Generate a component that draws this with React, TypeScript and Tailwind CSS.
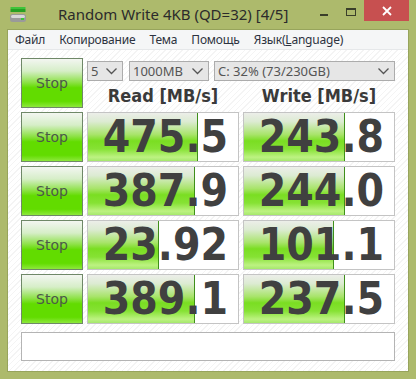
import React from "react";

const rows = [
  { r: "475.5", rw: 110, w: "243.8", ww: 101 },
  { r: "387.9", rw: 107, w: "244.0", ww: 101 },
  { r: "23.92", rw: 71, w: "101.1", ww: 90 },
  { r: "389.1", rw: 107, w: "237.5", ww: 101 },
];

function StopBtn() {
  return (
    <div className="h-[50px] border border-[#6f8868] bg-[linear-gradient(to_bottom,#f3f6f1_0%,#d6eec8_25%,#8fe24a_48%,#62dc00_60%,#62dc00_88%,#8de83c_100%)] flex items-center justify-center text-[14px] text-[#4b5a48] [font-family:'DejaVu_Sans',sans-serif]">
      Stop
    </div>
  );
}

function Cell({ v, fill }: { v: string; fill: number }) {
  return (
    <div className="relative h-[50px] bg-white border border-[#c4c4c4]">
      <div
        className="absolute left-0 top-0 bottom-0 border-r border-[#3f8f1a] bg-[linear-gradient(to_bottom,#eceee9_0%,#dcebd2_18%,#a8e46a_45%,#7ade22_58%,#86e234_75%,#bdf282_92%,#a5e86c_100%)]"
        style={{ width: fill }}
      />
      <div className="relative h-full flex items-center justify-end pr-[10px] text-[44px] font-bold leading-none text-[#404040] [font-family:'DejaVu_Sans_Condensed','DejaVu_Sans',sans-serif] [font-stretch:condensed]">
        {v}
      </div>
    </div>
  );
}

function Chevron() {
  return (
    <svg width="11" height="7" viewBox="0 0 11 7" className="shrink-0">
      <path d="M0.5 0.5 L5.5 5.5 L10.5 0.5" fill="none" stroke="#555" strokeWidth="1.3" />
    </svg>
  );
}

function Drop({ text, w }: { text: string; w: string }) {
  return (
    <div className={`${w} h-[20px] bg-[#e6e6e6] border border-[#acacac] flex items-center justify-between pl-[3px] pr-[5px] text-[13px] text-[#555] [font-family:'Noto_Sans',sans-serif] leading-none`}>
      <span>{text}</span>
      <Chevron />
    </div>
  );
}

export default function App() {
  return (
    <div className="w-[416px] h-[379px] bg-[#adba6c] flex flex-col overflow-hidden [font-family:'Noto_Sans',sans-serif]">
      {/* Title bar */}
      <div className="relative h-[30px] shrink-0 flex items-center">
        <svg width="16" height="16" viewBox="0 0 16 16" className="ml-[10px] mb-[1px]">
          <rect x="0.5" y="0" width="15" height="2" fill="#3ec43a" />
          <rect x="0.5" y="2" width="15" height="3" fill="#26a024" />
          <rect x="0" y="7" width="16" height="8" rx="2.5" fill="#9a9a9a" />
          <rect x="1" y="8" width="14" height="3" rx="1.5" fill="#d8d8d8" />
          <rect x="11" y="11" width="3" height="2" fill="#3ec43a" />
        </svg>
        <div className="ml-[32px] text-[15px] text-[#2b2b2b] leading-none mb-[1px]">
          Random Write 4KB (QD=32) [4/5]
        </div>
        <div className="absolute left-[320px] top-[14px] w-[8px] h-[2px] bg-[#3a3f2a]" />
        <div className="absolute left-[346px] top-[8px] w-[10px] h-[8px] border border-[#3a3f2a] border-t-2" />
        <div className="absolute left-[364px] top-0 w-[45px] h-[21px] bg-[#c75050] flex items-center justify-center">
          <svg width="10" height="10" viewBox="0 0 10 10">
            <path d="M1 1 L9 9 M9 1 L1 9" stroke="white" strokeWidth="1.8" />
          </svg>
        </div>
      </div>

      {/* Client */}
      <div className="mx-[8px] mb-[8px] flex-1 flex flex-col bg-white outline outline-1 outline-[#97a45c]">
        <div className="h-[20px] bg-[#f5f6f7] border-b border-[#e6e8ea] flex items-center pl-[7px] gap-[14px] text-[12px] text-[#2d3340] leading-none tracking-[-0.2px]">
          <span>Файл</span>
          <span>Копирование</span>
          <span>Тема</span>
          <span>Помощь</span>
          <span>Язык(<span className="underline">L</span>anguage)</span>
        </div>
        <div className="flex-1 px-[13px] pt-[8px] bg-[repeating-linear-gradient(135deg,#ffffff_0px,#ffffff_3px,#f4f4f4_3px,#f4f4f4_4px)]">
          <div className="grid grid-cols-[62px_152px_152px] gap-[4px]">
            <StopBtn />
            <div className="col-span-2 h-[50px] flex flex-col">
              <div className="mt-[3px] flex gap-[5px]">
                <Drop text="5" w="w-[36px]" />
                <Drop text="1000MB" w="w-[80px] ml-[1px]" />
                <Drop text="C: 32% (73/230GB)" w="w-[181px]" />
              </div>
              <div className="grid grid-cols-[152px_152px] gap-[4px] mt-[6px] text-[18px] font-bold text-[#3a3a3a] leading-none [font-family:'DejaVu_Sans_Condensed','DejaVu_Sans',sans-serif] [font-stretch:condensed]">
                <div className="text-center">Read [MB/s]</div>
                <div className="text-center">Write [MB/s]</div>
              </div>
            </div>
            {rows.map((row, i) => (
              <React.Fragment key={i}>
                <StopBtn />
                <Cell v={row.r} fill={row.rw} />
                <Cell v={row.w} fill={row.ww} />
              </React.Fragment>
            ))}
          </div>
          <div className="mt-[8px] h-[29px] bg-white border border-[#b4b4b4]" />
        </div>
      </div>
    </div>
  );
}
